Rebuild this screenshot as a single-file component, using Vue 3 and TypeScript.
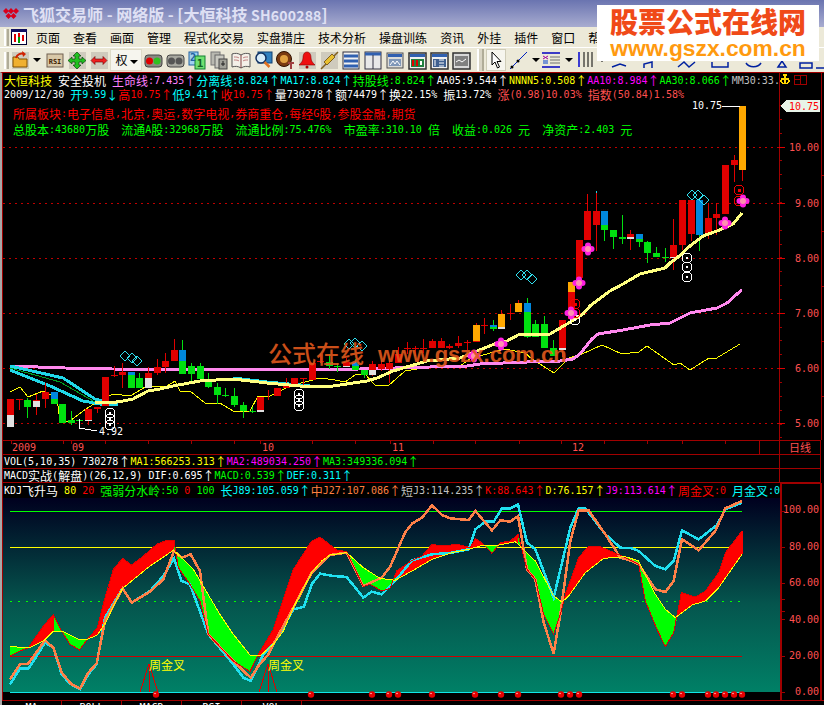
<script setup lang="ts">
type Seg = [string, number, number];
type Candle = [number, number, number, Seg[]];
type Pt = [number, number];
type Item = { t: string; c: string };

// [x, high, low, body segments as color/top/bottom] all in page pixels
const candles: Candle[] = [
  [10, 398, 426, [["r", 398, 414], ["w", 414, 426]]],
  [19, 398, 409, [["r", 398, 399]]],
  [27, 397, 417, [["g", 399, 406]]],
  [36, 393, 414, [["r", 399, 400], ["w", 400, 406]]],
  [45, 382, 407, [["r", 391, 398]]],
  [54, 391, 403, [["b", 391, 398], ["g", 398, 403]]],
  [62, 403, 422, [["g", 403, 422]]],
  [71, 410, 424, [["g", 419, 422]]],
  [79, 418, 424, [["g", 419, 420]]],
  [88, 408, 424, [["r", 408, 419], ["w", 419, 420]]],
  [97, 406, 412, [["r", 406, 408]]],
  [105, 376, 405, [["r", 376, 405]]],
  [114, 365, 376, [["r", 374, 375]]],
  [122, 362, 387, [["r", 371, 374]]],
  [131, 371, 387, [["b", 371, 374], ["g", 374, 387]]],
  [139, 372, 387, [["g", 377, 387]]],
  [148, 366, 387, [["r", 372, 377], ["w", 377, 387]]],
  [157, 358, 374, [["r", 366, 372]]],
  [165, 352, 372, [["r", 360, 366]]],
  [174, 338, 360, [["r", 349, 360]]],
  [182, 339, 373, [["b", 349, 360], ["g", 360, 373]]],
  [191, 362, 383, [["g", 365, 373]]],
  [200, 362, 378, [["g", 365, 378]]],
  [208, 372, 387, [["g", 378, 386]]],
  [217, 382, 403, [["g", 386, 394]]],
  [225, 387, 396, [["g", 394, 395]]],
  [234, 387, 406, [["g", 395, 404]]],
  [243, 401, 417, [["g", 404, 410]]],
  [252, 406, 412, [["g", 410, 411]]],
  [260, 396, 410, [["r", 396, 409], ["w", 409, 411]]],
  [268, 389, 399, []],
  [277, 387, 395, [["r", 387, 395]]],
  [286, 377, 387, [["r", 384, 387]]],
  [294, 377, 384, [["r", 377, 384]]],
  [303, 377, 384, [["r", 377, 378]]],
  [312, 362, 379, [["r", 362, 379]]],
  [320, 353, 362, [["r", 360, 361]]],
  [329, 353, 368, [["g", 361, 365]]],
  [337, 362, 371, [["g", 365, 366]]],
  [346, 357, 366, [["r", 361, 365], ["w", 365, 366]]],
  [355, 358, 369, [["b", 361, 365], ["g", 365, 369]]],
  [364, 369, 377, [["g", 369, 374]]],
  [372, 360, 375, [["r", 363, 369], ["w", 369, 374]]],
  [381, 359, 370, [["r", 363, 368]]],
  [389, 357, 382, [["r", 362, 368]]],
  [398, 346, 362, [["r", 353, 362]]],
  [407, 341, 353, [["r", 347, 348]]],
  [415, 345, 355, [["r", 347, 348]]],
  [423, 338, 352, [["r", 347, 348]]],
  [432, 338, 347, [["r", 340, 347]]],
  [441, 337, 347, [["r", 340, 347]]],
  [449, 343, 348, [["r", 345, 347]]],
  [458, 335, 347, [["r", 342, 345]]],
  [467, 339, 349, [["r", 341, 342]]],
  [476, 322, 341, [["o", 324, 340], ["r", 340, 341]]],
  [484, 317, 333, [["r", 324, 325]]],
  [493, 319, 330, [["b", 324, 326], ["g", 326, 328]]],
  [501, 309, 328, [["o", 313, 326], ["w", 326, 328]]],
  [510, 303, 319, [["r", 312, 313]]],
  [518, 299, 311, [["o", 302, 311]]],
  [527, 297, 337, [["b", 302, 311], ["g", 311, 336]]],
  [535, 319, 336, [["g", 323, 336]]],
  [544, 315, 347, [["g", 323, 347]]],
  [553, 339, 355, [["g", 347, 355]]],
  [562, 319, 356, [["r", 319, 347], ["w", 347, 349]]],
  [571, 281, 318, [["o", 281, 291], ["r", 291, 318]]],
  [579, 239, 277, [["r", 239, 277]]],
  [587, 193, 239, [["r", 210, 239]]],
  [596, 190, 250, [["r", 210, 224]]],
  [604, 210, 240, [["b", 210, 224], ["g", 224, 229]]],
  [613, 229, 248, [["g", 229, 236]]],
  [622, 214, 243, [["g", 236, 238]]],
  [630, 229, 249, [["r", 233, 236], ["w", 236, 238]]],
  [639, 233, 246, [["b", 233, 238], ["g", 238, 241]]],
  [647, 240, 262, [["g", 241, 252]]],
  [656, 246, 256, [["g", 252, 256]]],
  [665, 247, 261, [["g", 256, 257]]],
  [673, 218, 269, [["r", 244, 256], ["w", 256, 257]]],
  [682, 199, 249, [["r", 199, 244]]],
  [691, 199, 240, [["r", 199, 233]]],
  [699, 199, 250, [["b", 199, 234]]],
  [708, 202, 238, [["r", 217, 233], ["w", 233, 234]]],
  [716, 202, 234, [["r", 213, 217]]],
  [725, 164, 213, [["r", 164, 213]]],
  [734, 154, 181, [["r", 159, 164]]],
  [742, 105, 180, [["o", 105, 169]]],
];

const palette: Record<string, string> = { r: "#e00000", g: "#00e010", o: "#ffa800", b: "#0088dd", w: "#e0e0e0" };

function wickColor(c: Candle): string {
  const main = c[3].filter((s) => s[0] !== "w").pop();
  if (!main) return palette.r;
  if (main[0] === "b" || main[0] === "g") return palette.g;
  return palette.r;
}

const points = (list: number[][]) => list.map((p) => p.join(",")).join(" ");

const pink = [[10,365],[65,367],[112,368],[245,369],[360,368],[430,366],[467,365],[480,363],[527,361],[560,360],[573,358],[580,353],[592,338],[598,333],[623,329],[650,324],[670,322],[680,317],[690,312],[717,307],[727,302],[737,293],[742,289]];
const cream = [[95,401],[110,402],[123,400],[133,398],[148,390],[160,388],[173,385],[200,380],[233,378],[267,382],[300,385],[333,385],[367,380],[377,377],[393,370],[427,360],[460,357],[477,350],[497,342],[507,340],[520,333],[550,333],[567,323],[583,313],[590,305],[610,290],[623,283],[640,273],[665,267],[670,262],[677,257],[690,245],[703,235],[717,230],[733,223],[742,212]];
const thin = [[10,391],[20,386],[28,396],[43,390],[57,397],[60,420],[70,420],[83,410],[97,401],[113,393],[130,395],[147,385],[167,385],[175,380],[180,390],[190,390],[205,402],[220,402],[233,410],[250,410],[258,395],[270,395],[290,385],[320,377],[335,379],[345,381],[355,374],[365,373],[375,384],[388,385],[405,370],[430,366],[460,365],[470,358],[490,352],[505,348],[525,352],[532,358],[554,372],[569,357],[582,353],[602,344],[622,353],[639,351],[647,345],[674,364],[680,362],[690,369],[709,357],[715,358],[740,343]];
const cyanA = [[10,365],[63,377],[95,398],[110,402]];
const cyanB = [[10,369],[50,385],[83,400],[100,403],[118,403]];
const cyanC = [[233,377],[267,381],[300,384],[320,386]];
const greenThin = [[10,367],[60,381],[95,401]];

const diamonds: Pt[] = [[125,355],[132,357],[137,360],[349,343],[355,342],[362,345],[521,274],[527,274],[532,278],[692,194],[698,194],[704,199]];
const whiteRings: Pt[] = [[110,412],[110,418],[110,424],[299,393],[299,399],[299,405],[687,257],[687,266],[687,276],[575,319]];
const redRings: Pt[] = [[575,303],[575,312],[739,189],[739,200]];
const flowers: Pt[] = [[474,355],[501,343],[571,312],[579,282],[588,248],[725,222],[743,200]];

const priceLabels = [[146,"10.00"],[202,"9.00"],[257,"8.00"],[312,"7.00"],[367,"6.00"],[422,"5.00"]] as const;
const priceTicks = Array.from({ length: 25 }, (_, k) => 104 + k * 13.85);

const timeTicks = [11,63,71,105,148,191,234,260,312,355,390,433,475,519,561,604,647,682,725];
const timeLabels: [number, string][] = [[12,"2009"],[72,"09"],[262,"10"],[392,"11"],[572,"12"]];

// pixels read off two 3x crops of the lower panel, right crop starts at x=412
const fromCrop = (raw: number[][], x0: number): Pt[] => raw.map(([x, y]) => [x0 + x / 3, 500 + y / 3]);

const kLine = [
  ...fromCrop([[30,465],[60,450],[85,440],[130,375],[160,340],[185,390],[210,430],[238,447],[262,415],[292,380],[315,290],[340,205],[368,172],[395,192],[430,165],[470,130],[500,118],[522,118],[535,200],[570,250],[600,300],[625,400],[700,480],[750,512],[775,460],[820,385],[880,205],[935,120],[960,108],[1010,147],[1040,152],[1090,257],[1110,250],[1145,270],[1170,262],[1190,210]], 0),
  ...fromCrop([[0,178],[30,165],[60,130],[90,135],[135,130],[175,140],[190,112],[215,130],[240,157],[265,125],[295,120],[318,100],[345,205],[370,235],[395,340],[425,400],[445,340],[460,280],[500,170],[530,135],[560,135],[630,165],[680,190],[700,300],[735,385],[760,437],[785,395],[808,275],[850,288],[880,270],[920,215],[940,155],[990,90]], 412),
];
const dLine = [
  ...fromCrop([[30,437],[90,440],[130,420],[160,390],[185,390],[235,415],[262,415],[292,402],[320,360],[340,315],[368,262],[450,195],[520,148],[545,170],[580,205],[630,290],[660,340],[700,400],[750,462],[782,463],[820,430],[850,390],[880,320],[935,215],[965,180],[990,162],[1040,155],[1090,200],[1140,232],[1185,238]], 0),
  ...fromCrop([[0,210],[60,175],[120,155],[170,145],[215,132],[245,135],[310,122],[370,180],[425,285],[450,303],[470,285],[520,215],[575,172],[640,167],[680,180],[730,280],[760,325],[790,350],[840,312],[880,300],[920,260],[990,160]], 412),
];
const cyanLine = [
  ...fromCrop([[30,550],[60,503],[85,503],[110,465],[135,425],[160,440],[185,520],[210,548],[240,565],[265,520],[290,490],[315,350],[368,262],[395,305],[450,270],[490,225],[522,172],[545,240],[570,250],[625,400],[700,490],[730,530],[752,540],[790,460],[820,430],[880,325],[912,317],[935,250],[960,218],[1000,225],[1040,228],[1090,290],[1115,272],[1145,280],[1185,240]], 0),
  ...fromCrop([[0,178],[60,160],[120,155],[170,145],[190,85],[220,62],[245,62],[270,22],[295,22],[318,10],[345,125],[370,145],[425,290],[475,80],[500,22],[520,22],[580,100],[625,140],[660,142],[680,150],[730,195],[760,205],[785,180],[810,88],[860,115],[915,72],[940,25],[990,5]], 412),
];
const orangeLine = [
  ...fromCrop([[30,535],[60,490],[85,488],[135,418],[160,440],[185,515],[215,550],[240,563],[265,515],[290,487],[315,360],[368,262],[395,305],[450,272],[490,235],[522,150],[545,170],[572,160],[600,210],[625,400],[700,480],[730,510],[752,530],[775,495],[805,460],[820,430],[880,320],[935,215],[990,162],[1040,155],[1090,255],[1145,230],[1170,198],[1215,95]], 0),
  ...fromCrop([[0,68],[30,50],[60,13],[90,42],[115,52],[170,57],[190,30],[240,88],[265,58],[295,62],[318,45],[345,205],[370,235],[395,365],[425,457],[445,340],[475,120],[500,28],[530,28],[580,100],[625,170],[660,180],[680,190],[730,265],[760,273],[785,240],[810,115],[860,148],[910,90],[940,22],[990,0]], 412),
];

function at(line: Pt[], x: number): number {
  for (let i = 1; i < line.length; i++) {
    const [x0, y0] = line[i - 1];
    const [x1, y1] = line[i];
    if (x <= x1) return x1 === x0 ? y1 : y0 + ((x - x0) * (y1 - y0)) / (x1 - x0);
  }
  return line[line.length - 1][1];
}

// the band is coloured by trend, not by which line is on top
const greenSpans = [[10,28.3],[53.3,87.3],[174,258.3],[346.7,395],[484,500],[518,564],[625,677]];
let redBand = "";
let greenBand = "";
for (let x = 10; x <= 742; x++) {
  const seg = `M${x + 0.5} ${at(kLine, x).toFixed(1)}V${at(dLine, x).toFixed(1)}`;
  if (greenSpans.some(([a, b]) => x >= a && x < b)) greenBand += seg;
  else redBand += seg;
}

const guides = [[510,"#00ff00"],[546,"#ffff00"],[655,"#d00000"],[691,"#10e8e8"]] as const;
const midDots = Array.from({ length: 92 }, (_, k) => 10 + k * 8);
const balls = [156,311,372,389,398,432,475,501,518,561,570,579,673,682,708,716,725,734,742];
const kdjLabels = [[508,"100.00"],[545,"80.00"],[581,"60.00"],[618,"40.00"],[654,"20.00"],[690,"0.00"]] as const;
const kdjTicks = [510,546,582,598,610,618,655,691];
const crosses = [149, 268];

const tabs = ["MA", "BOLL", "MACD", "RSI", "VOL"];
const menus = ["页面","查看","画面","管理","程式化交易","实盘猎庄","技术分析","操盘训练","资讯","外挂","插件","窗口","帮助"];

const row1: Item[] = [
  { t: "大恒科技 ", c: "y" }, { t: "安全投机 ", c: "w" },
  { t: "生命线:7.435↑", c: "p" }, { t: "分离线:8.824↑", c: "c" }, { t: "MA17:8.824↑", c: "c" },
  { t: "持股线:8.824↑", c: "g" }, { t: "AA05:9.544↑", c: "w" }, { t: "NNNN5:0.508↑", c: "y" },
  { t: "AA10:8.984↑", c: "m" }, { t: "AA30:8.066↑", c: "g" }, { t: "MM30:33.", c: "s" },
];
const row2: Item[] = [
  { t: "2009/12/30 ", c: "w" }, { t: "开9.59↓", c: "c" }, { t: "高10.75↑", c: "r" }, { t: "低9.41↑", c: "c" },
  { t: "收10.75↑", c: "r" }, { t: "量730278↑", c: "w" }, { t: "额74479↑", c: "w" }, { t: "换22.15% 振13.72% ", c: "w" },
  { t: "涨(0.98)10.03% 指数(50.84)1.58%", c: "l" },
];
const row3: Item[] = [{ t: "所属板块:电子信息,北京,奥运,数字电视,券商重仓,每经G股,参股金融,期货", c: "r" }];
const row4: Item[] = [{ t: "总股本:43680万股  流通A股:32968万股  流通比例:75.476%  市盈率:310.10 倍  收益:0.026 元  净资产:2.403 元", c: "g" }];
const volRow: Item[] = [
  { t: "VOL(5,10,35) 730278↑", c: "w" }, { t: "MA1:566253.313↑", c: "y" }, { t: "MA2:489034.250↑", c: "m" }, { t: "MA3:349336.094↑", c: "g" },
];
const macdRow: Item[] = [
  { t: "MACD实战(解盘)(26,12,9) DIF:0.695↑", c: "w" }, { t: "MACD:0.539↑", c: "g" }, { t: "DEF:0.311↑", c: "c" },
];
const kdjRow: Item[] = [
  { t: "KDJ飞升马 ", c: "w" }, { t: "80 ", c: "y" }, { t: "20 ", c: "r" }, { t: "强弱分水岭:50 ", c: "g" }, { t: "0 ", c: "r" },
  { t: "100 ", c: "g" }, { t: "长J89:105.059↑", c: "c" }, { t: "中J27:107.086↑", c: "o" }, { t: "短J3:114.235↑", c: "s" },
  { t: "K:88.643↑", c: "r" }, { t: "D:76.157↑", c: "y" }, { t: "J9:113.614↑", c: "m" }, { t: "周金叉:0 ", c: "r" }, { t: "月金叉:0", c: "c" },
];

// bitmap font look: latin 6px wide, CJK and arrows 12px wide, so they need separate runs
function runs(text: string) {
  return text.match(/[^\x00-\x7f]+|[\x00-\x7f]+/g) ?? [];
}
const isWide = (s: string) => s.charCodeAt(0) > 127;
</script>

<template>
  <div class="app">
    <div class="title">
      <svg class="logo" width="18" height="14" viewBox="0 0 18 14">
        <path d="M4 1l3 3-3 3-3-3zM9 1l3 3-3 3-3-3zM14 1l3 3-3 3-3-3zM6.5 6l3 3-3 3-3-3zM11.5 6l3 3-3 3-3-3z" fill="#d8001c" />
      </svg>
      <span>飞狐交易师 - 网络版 - [大恒科技 <em>SH600288</em>]</span>
    </div>

    <div class="menubar">
      <i class="grip"></i>
      <svg class="menu-ico" width="16" height="16" viewBox="0 0 16 16">
        <rect x=".5" y=".5" width="15" height="15" fill="#fff" stroke="#003" />
        <rect x="0" y="0" width="16" height="3" fill="#101060" />
        <path d="M4 5v8M8 4v10M12 6v6" stroke="#e00000" stroke-width="2" />
        <path d="M8 8v6" stroke="#00a000" stroke-width="2" />
      </svg>
      <span v-for="m in menus" :key="m" class="menu">{{ m }}</span>
    </div>

    <div class="toolbar">
      <i class="grip"></i>
      <svg class="tool" viewBox="0 0 22 22">
        <rect x="3" y="3" width="17" height="17" fill="#cfcbbd" />
        <path d="M4 8h5l1 2h8v8H4z" fill="#f0b030" stroke="#805000" />
        <path d="M7 9c1-4 5-5 8-4" fill="none" stroke="#d02000" stroke-width="2" />
        <path d="M13 2l4 3-3 3z" fill="#d02000" />
      </svg>
      <span class="drop"></span>
      <svg class="tool tight" viewBox="0 0 22 22">
        <rect x="3" y="5" width="16" height="13" fill="#d8c8a8" stroke="#706050" />
        <text x="11" y="15" class="t-ico">RSI</text>
      </svg>
      <svg class="tool" viewBox="0 0 22 22">
        <rect x="3" y="3" width="17" height="17" fill="#cfcbbd" />
        <path d="M11 3l4 4h-2v3h3V8l4 3.5-4 3.5v-2h-3v3h2l-4 4-4-4h2v-3H6v2l-4-3.5L6 8v2h3V7H7z" fill="#20c020" stroke="#104010" stroke-width=".7" />
      </svg>
      <svg class="tool" viewBox="0 0 22 22">
        <rect x="3" y="3" width="17" height="17" fill="#cfcbbd" />
        <path d="M3 11.5l4-4v2.500h8V7.500l4 4-4 4V13H7v2.500z" fill="#f02020" stroke="#600" stroke-width=".6" />
      </svg>
      <span class="quan">权<i class="drop small"></i></span>
      <svg class="tool" viewBox="0 0 22 22">
        <rect x="3" y="6" width="17" height="12" rx="3" fill="#8a8a82" stroke="#444" />
        <circle cx="7.5" cy="12" r="3.5" fill="#e00000" />
        <circle cx="15" cy="12" r="3.5" fill="#30c020" />
      </svg>
      <svg class="tool" viewBox="0 0 22 22">
        <rect x="3" y="6" width="17" height="12" rx="3" fill="#a8a8a0" stroke="#444" />
        <circle cx="7.5" cy="12" r="3.5" fill="#555" />
        <circle cx="15" cy="12" r="3.5" fill="#555" />
      </svg>
      <svg class="tool" viewBox="0 0 22 22">
        <rect x="3" y="3" width="9" height="13" fill="#a0d0f0" stroke="#2060a0" />
        <rect x="9" y="7" width="10" height="13" fill="#70e070" stroke="#108030" />
        <text x="7" y="12" class="t-ico blue">2</text>
        <text x="14" y="18" class="t-ico dark">1</text>
      </svg>
      <svg class="tool" viewBox="0 0 22 22">
        <rect x="3" y="3" width="9" height="13" fill="#b8b8b0" stroke="#777" />
        <rect x="7" y="6" width="9" height="13" fill="#c8c8c0" stroke="#666" />
        <rect x="11" y="10" width="8" height="10" fill="#a0a098" stroke="#444" />
        <path d="M15 12v5M13 15h4" stroke="#222" />
      </svg>
      <svg class="tool" viewBox="0 0 22 22">
        <path d="M2 5c3-1 6-1 9 1 3-2 6-2 9-1v13c-3-1-6-1-9 1-3-2-6-2-9-1z" fill="#f4f0e8" stroke="#555" />
        <path d="M11 6v13" stroke="#804040" />
        <path d="M4 8c2 0 4 0 5 1M4 11c2 0 4 0 5 1M13 9c1-1 3-1 5-1M13 12c1-1 3-1 5-1" stroke="#c08080" fill="none" />
      </svg>
      <svg class="tool" viewBox="0 0 22 22">
        <rect x="6" y="3" width="14" height="11" fill="#3080c0" stroke="#104070" />
        <circle cx="9" cy="9" r="5" fill="#d8ecf8" stroke="#103060" stroke-width="1.5" />
        <path d="M12.5 13l5 5" stroke="#e07020" stroke-width="2.5" />
      </svg>
      <svg class="tool" viewBox="0 0 22 22">
        <circle cx="10" cy="10" r="7.5" fill="#7a3a10" stroke="#301000" />
        <circle cx="10" cy="10" r="4" fill="#e0a040" />
        <path d="M14 14h6M17 14v6" stroke="#a04040" stroke-width="2" />
      </svg>
      <svg class="tool" viewBox="0 0 22 22">
        <rect x="3" y="3" width="17" height="17" fill="#cfcbbd" />
        <path d="M11 3c3 0 4 3 4 6s2 5 4 7H3c2-2 4-4 4-7s1-6 4-6z" fill="#ee1010" stroke="#800" stroke-width=".6" />
        <circle cx="11" cy="18" r="1.5" fill="#a00" />
      </svg>
      <svg class="tool" viewBox="0 0 22 22">
        <rect x="3" y="3" width="17" height="17" fill="#cfcbbd" />
        <path d="M3 20l5-5M15 8l5-5" stroke="#806020" stroke-width="1.5" />
        <path d="M6 13l3 3 8-8-3-3z" fill="#e8c030" stroke="#806020" />
      </svg>
      <svg class="tool" viewBox="0 0 22 22">
        <rect x="3" y="3" width="16" height="17" fill="#f0f0f0" stroke="#303040" />
        <path d="M4 7h14M4 12h14M4 17h14" stroke="#3060b0" stroke-width="3" />
      </svg>
      <svg class="tool" viewBox="0 0 22 22">
        <rect x="3" y="3" width="16" height="17" fill="#e8e8e8" stroke="#303040" />
        <path d="M3 5h16" stroke="#3060b0" stroke-width="3" />
        <path d="M11 6v14" stroke="#303040" />
      </svg>
      <svg class="tool" viewBox="0 0 22 22">
        <rect x="3" y="4" width="16" height="15" fill="#dcdcd8" stroke="#505050" />
        <rect x="4" y="5" width="14" height="3" fill="#3060b0" />
        <rect x="5" y="10" width="12" height="7" fill="#8098b8" />
        <path d="M6 16l3-4 2 3 2-3 3 4" fill="none" stroke="#fff" />
      </svg>
      <svg class="tool" viewBox="0 0 22 22">
        <rect x="3" y="4" width="17" height="16" fill="#f0f0f0" stroke="#303030" stroke-width="1.5" />
        <rect x="4" y="5" width="15" height="3" fill="#3060b0" />
        <rect x="5" y="10" width="13" height="8" fill="#208040" />
        <path d="M7 11v6M11 11v6" stroke="#e00000" stroke-width="2" />
        <path d="M15 12v4" stroke="#fff" stroke-width="2" />
      </svg>
      <svg class="tool" viewBox="0 0 22 22">
        <rect x="3" y="4" width="17" height="16" fill="#f0f0f0" stroke="#303030" stroke-width="1.5" />
        <rect x="4" y="5" width="15" height="3" fill="#3060b0" />
        <rect x="5" y="10" width="13" height="8" fill="#406090" />
        <path d="M7 11v6M11 11h5M11 14h5M11 17h5" stroke="#fff" />
      </svg>
      <svg class="tool" viewBox="0 0 22 22">
        <rect x="3" y="4" width="17" height="16" fill="#d8d8d8" stroke="#303030" stroke-width="1.5" />
        <rect x="5" y="7" width="13" height="10" fill="#808080" />
        <path d="M6 13l3-2 3 2 4-3" fill="none" stroke="#fff" />
      </svg>
      <i class="grip wide"></i>
      <span class="pressed">
        <svg width="14" height="18" viewBox="0 0 14 18">
          <path d="M3 1v13l3-3 2.5 6 2-1-2.500-5.500h4z" fill="#fff" stroke="#000" />
        </svg>
      </span>
      <svg class="tool" viewBox="0 0 22 22">
        <path d="M2 20L19 3" stroke="#0020c0" />
        <circle cx="10" cy="12" r="1.5" fill="#000" />
        <circle cx="4" cy="18" r="1.5" fill="#000" />
      </svg>
      <span class="drop"></span>
      <svg class="tool" viewBox="0 0 22 22">
        <path d="M1 4h18M1 18h18" stroke="#0000c0" stroke-width="1.5" />
        <path d="M9 8h10M9 11h10M9 14h10" stroke="#707070" />
        <path d="M2 7l5 3M7 7l-5 3" stroke="#a000a0" />
        <path d="M2 12h5M2 14h5" stroke="#0040d0" />
      </svg>
      <span class="drop"></span>
      <svg class="tool" viewBox="0 0 22 22">
        <path d="M5 3v15" stroke="#0000d0" stroke-width="1.5" />
        <path d="M10 3v15M14 3v15M18 3v15" stroke="#000" />
      </svg>
      <span class="drop"></span>
      <svg class="tail" width="224" height="22" viewBox="0 0 224 22">
        <path d="M6 18l8-3 6 2M38 19v-4l8-2v6M72 18l6-5 5 5 6-5M106 13v5h16v-5M140 14c3 5 12 5 15 0M172 18l4-6 4 6zM194 14h12v5h-12zM210 19h12v-6" fill="none" stroke="#0020a0" stroke-width="1.5" />
      </svg>
    </div>

    <div class="main">
      <div class="price">
        <svg class="canvas" width="822" height="367" viewBox="2 72 822 367" shape-rendering="crispEdges">
          <path d="M2.5 72V439M779.5 72V439M821.5 72V439" stroke="#a00000" />
          <line v-for="p in priceLabels" :key="p[0]" x1="3" x2="779" :y1="p[0] + 0.5" :y2="p[0] + 0.5" class="dots" />
          <line v-for="y in priceTicks" :key="y" x1="779" x2="782" :y1="Math.round(y) + 0.5" :y2="Math.round(y) + 0.5" stroke="#a00000" />
          <line v-for="p in priceLabels" :key="'t' + p[0]" x1="779" x2="785" :y1="p[0] + 0.5" :y2="p[0] + 0.5" stroke="#e00000" />
          <line v-for="p in priceLabels" :key="'r' + p[0]" x1="821" x2="824" :y1="p[0] + 28.5" :y2="p[0] + 28.5" stroke="#a00000" />

          <polyline :points="points(thin)" class="l thin" />
          <polyline :points="points(pink)" class="l pink" />
          <polyline :points="points(cyanA)" class="l cyan" />
          <polyline :points="points(cyanB)" class="l cyan" />
          <polyline :points="points(greenThin)" class="l green" />
          <polyline :points="points(cyanC)" class="l cyan" />

          <g v-for="c in candles" :key="c[0]">
            <line :x1="c[0] + 0.5" :x2="c[0] + 0.5" :y1="c[1]" :y2="c[2]" :stroke="wickColor(c)" />
            <rect v-for="s in c[3]" :key="s[1]" :x="c[0] - 3" :y="s[1]" width="7" :height="s[2] - s[1]" :fill="palette[s[0]]" />
          </g>
          <rect x="596" y="190" width="1" height="2" fill="#20d8e8" />
          <polyline :points="points(cream)" class="l cream" />

          <g v-for="(d, i) in diamonds" :key="'d' + i">
            <path :d="`M${d[0] - 5} ${d[1]}l5-5 5 5-5 5z`" class="diamond" shape-rendering="auto" />
          </g>
          <g v-for="(r, i) in whiteRings" :key="'w' + i">
            <circle :cx="r[0]" :cy="r[1]" r="5" class="ring" />
            <rect :x="r[0] - 1" :y="r[1] - 1" width="2" height="2" fill="#fff" />
          </g>
          <g v-for="(r, i) in redRings" :key="'e' + i">
            <circle :cx="r[0]" :cy="r[1]" r="5" class="ring red" />
            <rect :x="r[0] - 1" :y="r[1] - 1" width="3" height="3" fill="#f00000" />
          </g>
          <g v-for="(f, i) in flowers" :key="'f' + i" shape-rendering="auto">
            <circle :cx="f[0] - 3.5" :cy="f[1]" r="3" fill="#ff20e0" />
            <circle :cx="f[0] + 3.5" :cy="f[1]" r="3" fill="#ff20e0" />
            <circle :cx="f[0]" :cy="f[1] - 3.5" r="3" fill="#ff20e0" />
            <circle :cx="f[0]" :cy="f[1] + 3.5" r="3" fill="#ff20e0" />
            <circle :cx="f[0]" :cy="f[1]" r="3" fill="#ff90b0" />
          </g>

          <path d="M79.5 418V427.5L85 428L97 430" class="l hair" />
          <text x="99" y="434" class="num w">4.92</text>
          <text x="692" y="108" class="num w">10.75</text>
          <path d="M722 105.5H740" stroke="#fff" />

          <text x="268" y="362" class="wm-cn">公式在线</text>
          <text x="378" y="361" class="wm-en">www.gszx.com.cn</text>

          <polygon points="780,105 786,99 820,99 820,111 786,111" fill="#e8f4e8" />
          <text x="819" y="109" class="num red end">10.75</text>
          <text v-for="p in priceLabels" :key="'l' + p[0]" x="819" :y="p[0] + 4" class="num lab end">{{ p[1] }}</text>

          <path d="M785 74v8M781 78h8M781 79c0 5 8 5 8 0M783 74h4" stroke="#ffd800" fill="none" stroke-width="1.5" />
          <rect x="794.5" y="74.5" width="12" height="9" fill="none" stroke="#a00000" />
          <path d="M800.5 74v10M794 78.5h6" stroke="#a00000" />
        </svg>

        <div class="quote">
          <template v-for="(it, i) in row1" :key="i">
            <span v-for="(t, j) in runs(it.t)" :key="j" :class="[it.c, { wide: isWide(t) }]">{{ t }}</span>
          </template>
        </div>
        <div class="quote">
          <template v-for="(it, i) in row2" :key="i">
            <span v-for="(t, j) in runs(it.t)" :key="j" :class="[it.c, { wide: isWide(t) }]">{{ t }}</span>
          </template>
        </div>
        <div class="quote third">
          <template v-for="(it, i) in row3" :key="i">
            <span v-for="(t, j) in runs(it.t)" :key="j" :class="[it.c, { wide: isWide(t) }]">{{ t }}</span>
          </template>
        </div>
        <div class="quote fourth">
          <template v-for="(it, i) in row4" :key="i">
            <span v-for="(t, j) in runs(it.t)" :key="j" :class="[it.c, { wide: isWide(t) }]">{{ t }}</span>
          </template>
        </div>
      </div>

      <div class="row">
        <svg class="axis" width="776" height="13" viewBox="3 440 776 13" shape-rendering="crispEdges">
          <line v-for="x in timeTicks" :key="x" :x1="x + 0.5" :x2="x + 0.5" y1="440" y2="443" stroke="#a00000" />
          <path d="M759.5 440V453" stroke="#a00000" />
          <text v-for="l in timeLabels" :key="l[0]" :x="l[0]" y="450" class="num lab">{{ l[1] }}</text>
        </svg>
        <span class="side daily">日线</span>
      </div>
      <div class="row">
        <div class="line">
          <template v-for="(it, i) in volRow" :key="i">
            <span v-for="(t, j) in runs(it.t)" :key="j" :class="[it.c, { wide: isWide(t) }]">{{ t }}</span>
          </template>
        </div>
        <span class="side"></span>
      </div>
      <div class="row">
        <div class="line">
          <template v-for="(it, i) in macdRow" :key="i">
            <span v-for="(t, j) in runs(it.t)" :key="j" :class="[it.c, { wide: isWide(t) }]">{{ t }}</span>
          </template>
        </div>
        <span class="side"></span>
      </div>
      <div class="row kdj-head">
        <div class="line">
          <template v-for="(it, i) in kdjRow" :key="i">
            <span v-for="(t, j) in runs(it.t)" :key="j" :class="[it.c, { wide: isWide(t) }]">{{ t }}</span>
          </template>
        </div>
        <span class="side box"></span>
      </div>

      <svg class="kdj" width="822" height="203" viewBox="2 496 822 203" shape-rendering="crispEdges">
        <defs>
          <linearGradient id="bg" x1="0" y1="0" x2="0" y2="1">
            <stop offset="0" stop-color="#00001f" />
            <stop offset="0.55" stop-color="#05564e" />
            <stop offset="1" stop-color="#008066" />
          </linearGradient>
        </defs>
        <rect x="3" y="497" width="777" height="194" fill="url(#bg)" />
        <path d="M2.5 496V699" stroke="#a00000" />
        <path d="M781 496V699M821 496V699" stroke="#a00000" stroke-width="2" />
        <line v-for="y in kdjTicks" :key="y" x1="780" x2="785" :y1="y + 0.5" :y2="y + 0.5" stroke="#a00000" />

        <rect v-for="g in guides" :key="g[0]" x="10" :y="g[0]" width="732" height="1" :fill="g[1]" />
        <rect v-for="x in midDots" :key="x" :x="x" y="600" width="2" height="1" fill="#00ff00" />
        <path d="M744 691.5H779" stroke="#000" stroke-dasharray="1 2" />

        <path :d="redBand" stroke="#ff0000" />
        <path :d="greenBand" stroke="#00ff00" />
        <polyline :points="points(cyanLine)" class="l kc" />
        <polyline :points="points(orangeLine)" class="l ko" />
        <polyline :points="points(kLine)" class="l kr" />
        <polyline :points="points(dLine)" class="l kd" />

        <g v-for="x in crosses" :key="x">
          <path :d="`M${x - 9} 691L${x} 663L${x + 9} 691M${x + 0.5} 664V691`" stroke="#e00000" fill="none" />
          <text :x="x" y="669" class="cross-tag">周金叉</text>
        </g>
        <g v-for="x in balls" :key="x" shape-rendering="auto">
          <circle :cx="x" cy="693.5" r="3.2" fill="#e80000" />
          <circle :cx="x - 1" cy="692.5" r=".8" fill="#ffc0c0" />
        </g>

        <text v-for="l in kdjLabels" :key="l[0]" x="819" :y="l[0] + 4" class="num lab end">{{ l[1] }}</text>
      </svg>

      <div class="tabs">
        <span v-for="t in tabs" :key="t" class="tab">{{ t }}</span>
      </div>
    </div>

    <div class="stamp">
      <div class="stamp-cn">股票公式在线网</div>
      <div class="stamp-en">www.gszx.com.cn</div>
    </div>
  </div>
</template>

<style scoped>
.app {
  position: relative;
  width: 824px;
  height: 705px;
  overflow: hidden;
  display: flex;
  flex-direction: column;
  background: #000;
  font-family: "Noto Sans CJK SC", "Liberation Sans", sans-serif;
}
.title {
  height: 27px;
  display: flex;
  align-items: center;
  gap: 3px;
  padding-left: 2px;
  background: linear-gradient(#6a74b0, #a8acd0);
  color: #dfe0f4;
  font-size: 16px;
  font-weight: 700;
  white-space: pre;
}
.title em {
  font-style: normal;
  font-size: 14px;
  letter-spacing: 0.2px;
}
.menubar {
  height: 20px;
  display: flex;
  align-items: center;
  gap: 13px;
  background: #ece9d8;
  font-size: 12px;
  color: #000;
  padding-left: 4px;
}
.menu-ico {
  margin-left: -11px;
  margin-right: -4px;
}
.menu {
  white-space: nowrap;
}
.grip {
  width: 5px;
  height: 17px;
  flex: none;
  box-sizing: border-box;
  border-left: 2px solid #fff;
  border-right: 2px solid #b0ac98;
  background: #d8d4c4;
}
.toolbar {
  height: 24px;
  display: flex;
  align-items: center;
  background: #ece9d8;
  border-top: 1px solid #fff;
  padding-left: 4px;
}
.tool {
  width: 22px;
  height: 22px;
  flex: none;
}
.tool.tight {
  margin-left: 2px;
}
.tail {
  margin-left: -1px;
  flex: none;
}
.drop {
  width: 11px;
  height: 22px;
  flex: none;
  position: relative;
}
.drop::after {
  content: "";
  position: absolute;
  left: 2px;
  top: 9px;
  border: 4px solid transparent;
  border-top: 4px solid #000;
  border-bottom: 0;
}
.drop.small {
  width: 9px;
  height: 12px;
  display: inline-block;
  vertical-align: middle;
}
.drop.small::after {
  top: 4px;
}
.quan {
  width: 32px;
  height: 22px;
  flex: none;
  background: #f6f5ee;
  border: 1px solid #dedbc8;
  box-sizing: border-box;
  font-size: 12px;
  line-height: 20px;
  text-align: center;
}
.grip.wide {
  margin-left: 5px;
  margin-right: 2px;
  width: 7px;
  height: 22px;
}
.pressed {
  width: 20px;
  height: 22px;
  flex: none;
  box-sizing: border-box;
  border: 1px solid #cfccb8;
  background: #f6f5ee;
  display: flex;
  align-items: center;
  justify-content: center;
  margin-right: 2px;
}
.main {
  flex: 1;
  min-height: 0;
  border-left: 2px solid #a8a8a8;
  border-top: 1px solid #a00000;
  background: #000;
  display: flex;
  flex-direction: column;
  overflow: hidden;
}
.price {
  position: relative;
  height: 367px;
  flex: none;
}
.canvas {
  position: absolute;
  left: 0;
  top: 0;
}
.quote {
  position: relative;
  height: 14px;
  padding-left: 2px;
  white-space: pre;
  display: flex;
  align-items: center;
}
.quote.third {
  margin-top: 5px;
  padding-left: 11px;
}
.quote.fourth {
  margin-top: 2px;
  padding-left: 11px;
}
.quote span,
.line span {
  font-family: "DejaVu Sans Mono", monospace;
  font-size: 10px;
  line-height: 13px;
  white-space: pre;
}
.quote span.wide,
.line span.wide {
  font-family: "Noto Sans CJK SC", sans-serif;
  font-size: 12px;
}
.y { color: #ffff00; }
.w { color: #ffffff; }
.p { color: #ff80ff; }
.c { color: #00ffff; }
.g { color: #00ff00; }
.m { color: #ff00ff; }
.s { color: #c0c0c0; }
.r { color: #ff0000; }
.l { color: #ff5050; }
.o { color: #ff8040; }
.row {
  height: 14px;
  flex: none;
  box-sizing: border-box;
  border-top: 1px solid #a00000;
  border-left: 1px solid #a00000;
  display: flex;
  margin-right: 3px;
}
.row .line {
  flex: 1;
  padding-left: 1px;
  display: flex;
  align-items: center;
  white-space: pre;
}
.axis {
  flex: 1;
  display: block;
}
.side {
  width: 42px;
  flex: none;
  box-sizing: border-box;
  border-left: 1px solid #a00000;
  border-right: 1px solid #a00000;
}
.daily {
  color: #ff5050;
  font-size: 11px;
  line-height: 13px;
  text-align: center;
}
.kdj-head {
  height: 15px;
}
.side.box {
  border-left-width: 2px;
  border-right-width: 2px;
  border-top: 1px solid #a00000;
}
.kdj {
  display: block;
  flex: none;
}
.tabs {
  border-top: 1px solid #a00000;
  display: flex;
}
.tab {
  width: 60px;
  height: 30px;
  box-sizing: border-box;
  border-right: 1px solid #a00000;
  text-align: center;
  color: #fff;
  padding-top: 1px;
  font-family: "DejaVu Sans Mono", monospace;
  font-size: 10px;
  line-height: 12px;
}
.stamp {
  position: absolute;
  left: 597px;
  top: 5px;
  width: 222px;
  height: 56px;
  background: #fff;
  text-align: center;
  font-weight: 700;
}
.stamp-cn {
  color: #f04a18;
  font-size: 28px;
  line-height: 33px;
  font-weight: 900;
}
.stamp-en {
  color: #ff9a10;
  font-family: "Liberation Sans", sans-serif;
  font-size: 22.8px;
  line-height: 20px;
}

/* chart parts */
.dots {
  stroke: #c00000;
  stroke-dasharray: 2 4;
}
.l {
  fill: none;
}
.thin {
  stroke: #ffff00;
}
.pink {
  stroke: #ff88ee;
  stroke-width: 3;
}
.cream {
  stroke: #ffff80;
  stroke-width: 3;
}
.cyan {
  stroke: #20d8e8;
  stroke-width: 3;
}
.green {
  stroke: #00a020;
}
.hair {
  stroke: #fff;
}
.diamond {
  fill: none;
  stroke: #30e0f0;
}
.ring {
  fill: none;
  stroke: #fff;
}
.ring.red {
  stroke: #f00000;
}
.num {
  font-family: "DejaVu Sans Mono", monospace;
  font-size: 10px;
}
.num.w {
  fill: #fff;
}
.num.lab {
  fill: #ff5050;
}
.num.red {
  fill: #ff0000;
}
.end {
  text-anchor: end;
}
.wm-cn {
  fill: #e0581c;
  font-size: 24px;
  font-weight: 500;
  opacity: 0.9;
  font-family: "Noto Sans CJK SC", sans-serif;
}
.wm-en {
  fill: #e0581c;
  font-size: 22px;
  font-weight: 700;
  opacity: 0.9;
  font-family: "Liberation Sans", sans-serif;
}
.kc {
  stroke: #20e0f0;
  stroke-width: 2.5;
}
.ko {
  stroke: #ff8048;
  stroke-width: 2.5;
}
.kr {
  stroke: #e00000;
}
.kd {
  stroke: #ffff00;
}
.cross-tag {
  fill: #ffff00;
  font-size: 12px;
  font-family: "Noto Sans CJK SC", sans-serif;
}
.t-ico {
  font-family: "DejaVu Sans Mono", monospace;
  font-size: 7px;
  font-weight: 700;
  text-anchor: middle;
  fill: #402000;
}
.t-ico.blue {
  font-size: 10px;
  fill: #2060a0;
}
.t-ico.dark {
  font-size: 11px;
  fill: #106020;
}
</style>
